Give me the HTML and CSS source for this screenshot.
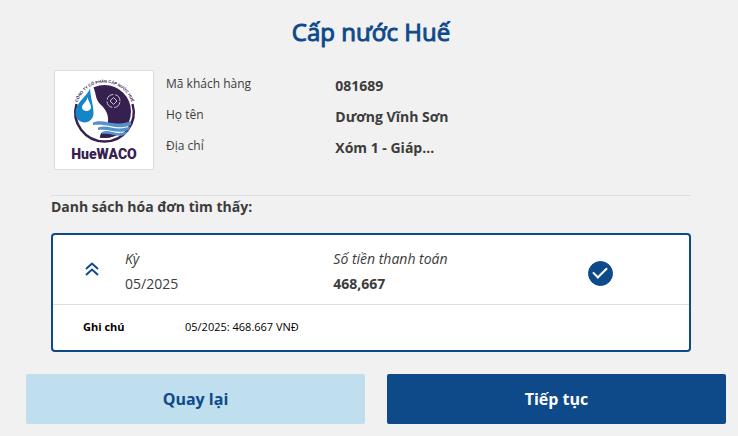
FILE: index.html
```html
<!DOCTYPE html>
<html lang="vi">
<head>
  <meta charset="UTF-8" />
  <meta name="viewport" content="width=device-width, initial-scale=1.0" />
  <title>Cấp nước Huế</title>
  <link rel="stylesheet" href="styles.css">
</head>
<body>

  <main class="page">
    <div class="content">
      <h1 class="title">Cấp nước Huế</h1>

      <section class="customer">
        <div class="logo">
          <svg viewBox="0 0 98 98" role="img" aria-label="HueWACO">
            <defs>
              <path id="arc" d="M22 33 A28.400 28.400 0 0 1 77 33" />
              <clipPath id="disc"><circle cx="49.500" cy="40.500" r="26.500" /></clipPath>
            </defs>
            <path d="M21.500 33 A29.200 29.200 0 1 0 77.500 33" fill="none" stroke="#36204f" stroke-width="2.400" />
            <g clip-path="url(#disc)">
              <path d="M36 12 C42 20 39 28 46 34 C54 41 56 52 48 60 C46 62 45 65 44 70 L80 70 L80 10 Z" fill="#36204f" />
              <path d="M39 52 C50 47 58 58 80 50 L80 63 C66 68 56 60 46 65 Z" fill="#fff" />
              <path d="M46 62 C56 60 62 68 76 61 L70 70 L44 70 Z" fill="#36204f" />
            </g>
            <path d="M38 51.500 C50 47 58 57 76 50 L76 54 C62 60 54 52 38 54 Z M43 56.500 C53 52.500 60 61 75 55.500 L74 59 C62 64 54 57 43 59 Z M47 61 C55 57.500 62 66 72 60 L71 63 C63 68 56 61 47 63 Z" fill="#5592cc" />
            <path d="M35 17 C33 25 20.500 31 20.500 42 C20.500 48 25 51.500 29.500 51.500 C34.500 51.500 38.500 47.500 38.500 42 C38.500 34 35.500 27 35 17 Z" fill="#1486c8" />
            <path d="M32.500 26 C32 31 27 33 27 36.500 C27 41 36 41 36 36.500 C36 33 33.500 31 32.500 26 Z" fill="#fff" />
            <g fill="none" stroke="#cfc6d8">
              <circle cx="58.500" cy="30" r="6.500" stroke-dasharray="8.200 2.010" stroke-dashoffset="-1" />
              <path d="M58.500 26.500 L62 30 L58.500 33.500 L55 30 Z" />
            </g>
            <text class="logo-arc" text-anchor="middle"><textPath href="#arc" startOffset="50%">CÔNG TY CỔ PHẦN CẤP NƯỚC HUẾ</textPath></text>
            <text class="logo-name" x="49" y="88" text-anchor="middle">HueWACO</text>
          </svg>
        </div>
        <dl class="details">
          <dt>Mã khách hàng</dt>
          <dd>081689</dd>
          <dt>Họ tên</dt>
          <dd>Dương Vĩnh Sơn</dd>
          <dt>Địa chỉ</dt>
          <dd>Xóm 1 - Giáp...</dd>
        </dl>
      </section>

      <h2 class="list-title">Danh sách hóa đơn tìm thấy:</h2>

      <article class="bill">
        <div class="bill-main">
          <button type="button" class="toggle" aria-label="Thu gọn">
            <svg viewBox="0 0 14 14" width="14" height="14">
              <path d="M1 7 L7 1.500 L13 7 M1 13 L7 7.500 L13 13" fill="none" stroke="#0e4a8a" stroke-width="2" />
            </svg>
          </button>
          <div class="bill-col">
            <span class="label">Kỳ</span>
            <span>05/2025</span>
          </div>
          <div class="bill-col">
            <span class="label">Số tiền thanh toán</span>
            <strong>468,667</strong>
          </div>
          <input type="checkbox" class="check" aria-label="Chọn hóa đơn 05/2025" checked>
        </div>
        <div class="bill-note">
          <strong>Ghi chú</strong>
          <span>05/2025: 468.667 VNĐ</span>
        </div>
      </article>
    </div>

    <div class="actions">
      <button type="button" class="btn btn-back">Quay lại</button>
      <button type="button" class="btn btn-next">Tiếp tục</button>
    </div>
  </main>

</body>
</html>
```
FILE: styles.css
```css
* {
  box-sizing: border-box;
  margin: 0;
  padding: 0;
}

body {
  font-family: "Open Sans", "Noto Sans", sans-serif;
  font-size: 14px;
  line-height: 20px;
  color: #3c3c3c;
  background: #f1f1f1;
}

.page {
  padding: 16px 12px 12px 26px;
}

.content {
  padding: 0 35px 0 25px;
}

.title {
  font-size: 24px;
  font-weight: 400;
  line-height: 32px;
  text-align: center;
  color: #0e4a8a;
  -webkit-text-stroke: 1px #0e4a8a;
}

.customer {
  display: flex;
  gap: 12px;
  padding: 22px 3px 25px;
  border-bottom: 1px solid #dedede;
}

.logo {
  flex: none;
  width: 100px;
  height: 100px;
  background: #fff;
  border: 1px solid #dedede;
}

.logo svg {
  display: block;
}

.logo-arc {
  font-family: "Liberation Sans", sans-serif;
  font-size: 4px;
  font-weight: 700;
  fill: #36204f;
}

.logo-name {
  font-family: Roboto, sans-serif;
  font-size: 14px;
  font-weight: 900;
  fill: #36204f;
}

.details {
  flex: 1;
  display: grid;
  grid-template-columns: 12fr 25fr;
  grid-auto-rows: 31px;
}

.details dt {
  padding-top: 4px;
  font-size: 12px;
}

.details dd {
  padding-top: 6px;
  font-weight: 700;
}

.list-title {
  font-size: 14px;
  line-height: 22px;
}

.bill {
  margin-top: 15px;
  background: #fff;
  border: 2px solid #0e4a8a;
  border-radius: 4px;
}

.bill-main {
  display: grid;
  grid-template-columns: 72px 9fr 11fr 101px;
  align-items: center;
  padding: 11px 0 8px;
  border-bottom: 1px solid #dedede;
}

.toggle {
  justify-self: center;
  margin: 0 0 4px 6px;
  width: 14px;
  height: 14px;
  background: none;
  border: 0;
  cursor: pointer;
}

.toggle svg {
  display: block;
}

.bill-col {
  display: flex;
  flex-direction: column;
  line-height: 25px;
}

.label {
  font-style: italic;
}

.check {
  appearance: none;
  width: 25px;
  height: 25px;
  margin-top: 4px;
  display: grid;
  place-items: center;
  border: 1px solid #0e4a8a;
  border-radius: 50%;
  cursor: pointer;
}

.check:checked {
  background: #0e4a8a;
}

.check:checked::after {
  content: "";
  width: 12px;
  height: 6px;
  border-left: 2px solid #fff;
  border-bottom: 2px solid #fff;
  transform: translateY(-2px) rotate(-45deg);
}

.bill-note {
  display: grid;
  grid-template-columns: 102px 1fr;
  padding: 12px 30px 13px;
  font-size: 11px;
  color: #000;
}

.actions {
  display: flex;
  gap: 22px;
  margin-top: 22px;
}

.btn {
  flex: 1;
  height: 50px;
  border: 0;
  border-radius: 2px;
  font-family: inherit;
  font-size: 16px;
  font-weight: 700;
  cursor: pointer;
}

.btn-back {
  color: #0e4a8a;
  background: #bfdeee;
}

.btn-next {
  color: #fff;
  background: #0e4a8a;
}
```
